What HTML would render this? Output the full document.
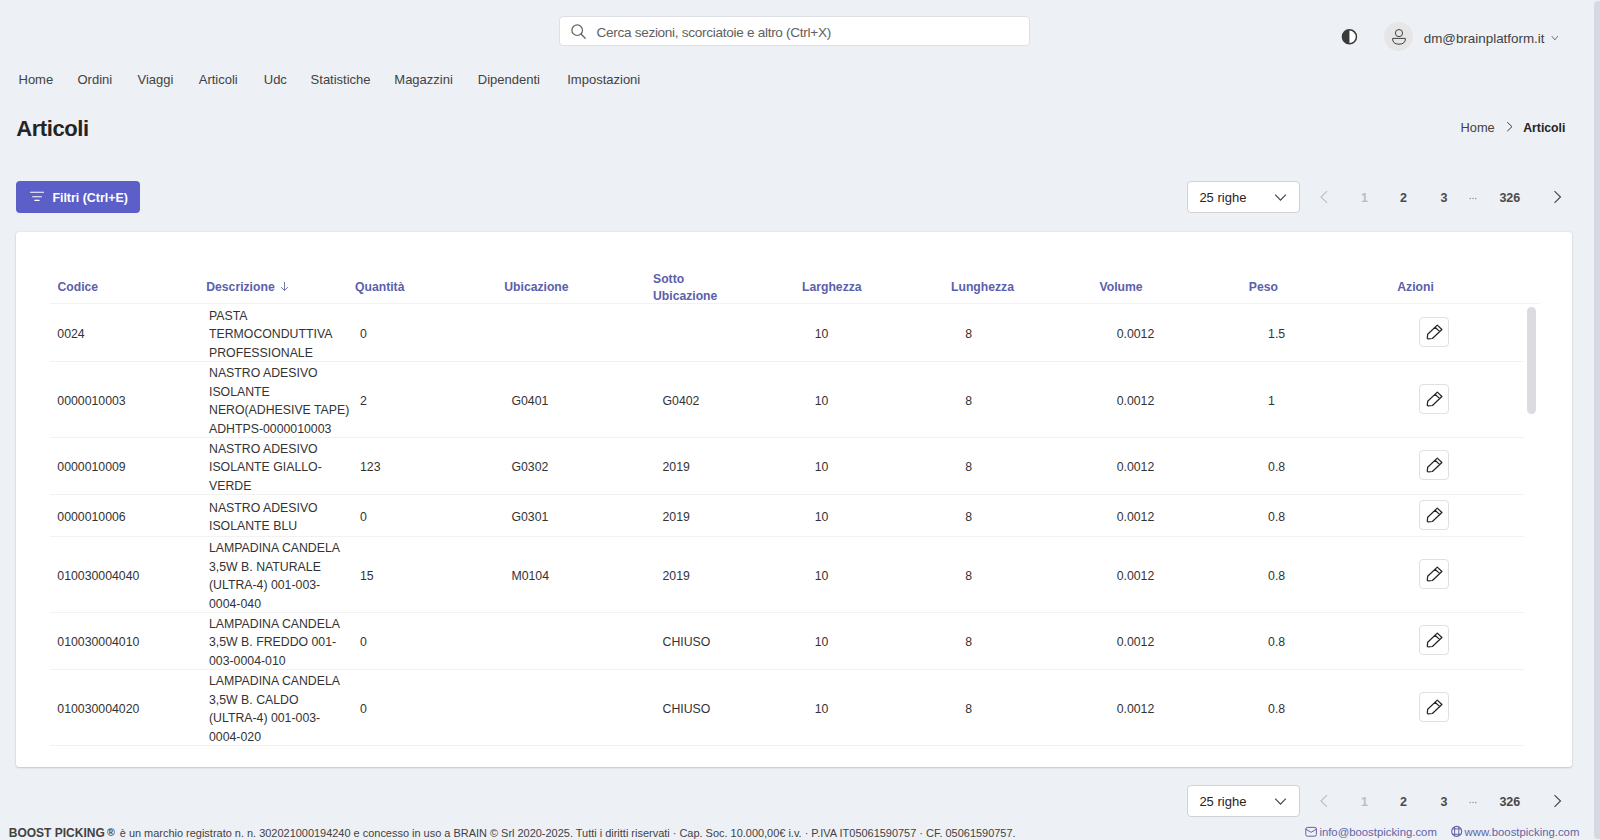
<!DOCTYPE html>
<html><head><meta charset="utf-8"><style>
html,body{margin:0;padding:0;}
body{width:1600px;height:840px;overflow:hidden;position:relative;background:#edf0f5;font-family:"Liberation Sans",sans-serif;}
.t{position:absolute;white-space:pre;line-height:1;}
svg{display:block}
</style></head><body>
<div style="position:absolute;left:1594px;top:1px;width:8px;height:838px;border-radius:4px;background:#d6d9e1"></div>
<div style="position:absolute;left:559px;top:16px;width:469px;height:28px;border:1px solid #dcdfe4;border-radius:4px;background:#fff"></div>
<svg style="position:absolute;left:566px;top:20px" width="24" height="24" viewBox="0 0 24 24"><circle cx="11.2" cy="10.2" r="5.3" fill="none" stroke="#616161" stroke-width="1.2"/><path d="M15 14 L19.2 18.2" stroke="#616161" stroke-width="1.3" stroke-linecap="round"/></svg>
<div class="t" style="left:596.40px;top:26.08px;font-size:13.6px;color:#616161;letter-spacing:-0.3px;">Cerca sezioni, scorciatoie e altro (Ctrl+X)</div>
<svg style="position:absolute;left:1339px;top:27px" width="20" height="20" viewBox="0 0 20 20"><circle cx="10.45" cy="9.85" r="7" fill="#fff" stroke="#3a3a3a" stroke-width="1.5"/><path d="M10.45 2.85 A7 7 0 0 0 10.45 16.85 Z" fill="#3a3a3a"/></svg>
<div style="position:absolute;left:1384px;top:22px;width:29px;height:29px;border-radius:50%;background:#e6e6e6"></div>
<svg style="position:absolute;left:1384px;top:22px" width="29" height="29" viewBox="0 0 29 29"><circle cx="15" cy="11.1" r="3.6" fill="none" stroke="#424242" stroke-width="1"/><path d="M8.6 16.4 H21.4 Q21.6 22.2 15 22.2 Q8.4 22.2 8.6 16.4 Z" fill="none" stroke="#424242" stroke-width="1" stroke-linejoin="round"/></svg>
<div class="t" style="left:1423.75px;top:31.85px;font-size:13.4px;color:#424242;">dm@brainplatform.it</div>
<svg style="position:absolute;left:1550px;top:34px" width="10" height="8" viewBox="0 0 10 8"><path d="M1.7 2 L4.8 5.9 L7.9 2" fill="none" stroke="#616161" stroke-width="0.9"/></svg>
<div class="t" style="left:18.50px;top:72.74px;font-size:13px;color:#424242;">Home</div>
<div class="t" style="left:77.50px;top:72.74px;font-size:13px;color:#424242;">Ordini</div>
<div class="t" style="left:137.50px;top:72.74px;font-size:13px;color:#424242;">Viaggi</div>
<div class="t" style="left:198.75px;top:72.74px;font-size:13px;color:#424242;">Articoli</div>
<div class="t" style="left:263.75px;top:72.74px;font-size:13px;color:#424242;">Udc</div>
<div class="t" style="left:310.60px;top:72.74px;font-size:13px;color:#424242;">Statistiche</div>
<div class="t" style="left:394.30px;top:72.74px;font-size:13px;color:#424242;">Magazzini</div>
<div class="t" style="left:477.80px;top:72.74px;font-size:13px;color:#424242;">Dipendenti</div>
<div class="t" style="left:567.25px;top:72.74px;font-size:13px;color:#424242;">Impostazioni</div>
<div class="t" style="left:16.25px;top:117.62px;font-size:22px;font-weight:700;color:#242424;letter-spacing:-0.43px;">Articoli</div>
<div class="t" style="left:1460.60px;top:121.96px;font-size:12.8px;color:#424242;">Home</div>
<svg style="position:absolute;left:1504px;top:120px" width="12" height="14" viewBox="0 0 12 14"><path d="M3.2 2.2 L8 6.7 L3.2 11.2" fill="none" stroke="#424242" stroke-width="1"/></svg>
<div class="t" style="left:1523.20px;top:121.63px;font-size:12.25px;font-weight:700;color:#242424;">Articoli</div>
<div style="position:absolute;left:16px;top:181px;width:124px;height:32px;border-radius:4px;background:#5b5fc7"></div>
<svg style="position:absolute;left:28px;top:189px" width="18" height="16" viewBox="0 0 18 16"><path d="M2.5 3.3 H15.5 M4.7 7.8 H13.3 M6.9 11.4 H11.1" stroke="#fff" stroke-width="1.1" stroke-linecap="round"/></svg>
<div class="t" style="left:52.40px;top:192.10px;font-size:12.4px;font-weight:700;color:#ffffff;">Filtri (Ctrl+E)</div>
<div style="position:absolute;left:1187px;top:181px;width:111px;height:30px;border:1px solid #d1d1d1;border-radius:4px;background:#fff"></div>
<div class="t" style="left:1199.40px;top:191.24px;font-size:13px;color:#242424;">25 righe</div>
<svg style="position:absolute;left:1272px;top:190px" width="16" height="14" viewBox="0 0 16 14"><path d="M3.2 4.6 L8.5 10.2 L13.8 4.6" fill="none" stroke="#424242" stroke-width="1.1"/></svg>
<svg style="position:absolute;left:1316px;top:188px" width="14" height="18" viewBox="0 0 14 18"><path d="M11 3.2 L5 9 L11 14.8" fill="none" stroke="#bdbdbd" stroke-width="1.1"/></svg>
<div class="t" style="left:1361.00px;top:192.17px;font-size:12.5px;font-weight:700;color:#bdbdbd;">1</div>
<div class="t" style="left:1400.00px;top:192.17px;font-size:12.5px;font-weight:700;color:#4a4a4a;">2</div>
<div class="t" style="left:1440.60px;top:192.17px;font-size:12.5px;font-weight:700;color:#4a4a4a;">3</div>
<svg style="position:absolute;left:1468px;top:196px" width="10" height="5" viewBox="0 0 10 5"><circle cx="2.2" cy="2.5" r="0.7" fill="#888"/><circle cx="5" cy="2.5" r="0.7" fill="#888"/><circle cx="7.8" cy="2.5" r="0.7" fill="#888"/></svg>
<div class="t" style="left:1499.40px;top:192.17px;font-size:12.5px;font-weight:700;color:#4a4a4a;">326</div>
<svg style="position:absolute;left:1550px;top:188px" width="14" height="18" viewBox="0 0 14 18"><path d="M4.5 3.2 L10.5 9 L4.5 14.8" fill="none" stroke="#424242" stroke-width="1.1"/></svg>
<div style="position:absolute;left:1187px;top:785px;width:111px;height:30px;border:1px solid #d1d1d1;border-radius:4px;background:#fff"></div>
<div class="t" style="left:1199.40px;top:795.24px;font-size:13px;color:#242424;">25 righe</div>
<svg style="position:absolute;left:1272px;top:794px" width="16" height="14" viewBox="0 0 16 14"><path d="M3.2 4.6 L8.5 10.2 L13.8 4.6" fill="none" stroke="#424242" stroke-width="1.1"/></svg>
<svg style="position:absolute;left:1316px;top:792px" width="14" height="18" viewBox="0 0 14 18"><path d="M11 3.2 L5 9 L11 14.8" fill="none" stroke="#bdbdbd" stroke-width="1.1"/></svg>
<div class="t" style="left:1361.00px;top:796.17px;font-size:12.5px;font-weight:700;color:#bdbdbd;">1</div>
<div class="t" style="left:1400.00px;top:796.17px;font-size:12.5px;font-weight:700;color:#4a4a4a;">2</div>
<div class="t" style="left:1440.60px;top:796.17px;font-size:12.5px;font-weight:700;color:#4a4a4a;">3</div>
<svg style="position:absolute;left:1468px;top:800px" width="10" height="5" viewBox="0 0 10 5"><circle cx="2.2" cy="2.5" r="0.7" fill="#888"/><circle cx="5" cy="2.5" r="0.7" fill="#888"/><circle cx="7.8" cy="2.5" r="0.7" fill="#888"/></svg>
<div class="t" style="left:1499.40px;top:796.17px;font-size:12.5px;font-weight:700;color:#4a4a4a;">326</div>
<svg style="position:absolute;left:1550px;top:792px" width="14" height="18" viewBox="0 0 14 18"><path d="M4.5 3.2 L10.5 9 L4.5 14.8" fill="none" stroke="#424242" stroke-width="1.1"/></svg>
<div style="position:absolute;left:16px;top:232px;width:1556px;height:535px;border-radius:3px;background:#fff;box-shadow:0 0 2px rgba(0,0,0,0.12),0 1px 2px rgba(0,0,0,0.14)"></div>
<div class="t" style="left:57.50px;top:281.17px;font-size:12.2px;font-weight:700;color:#5c5fab;">Codice</div>
<div class="t" style="left:206.25px;top:281.17px;font-size:12.2px;font-weight:700;color:#5c5fab;">Descrizione</div>
<div class="t" style="left:355.00px;top:281.17px;font-size:12.2px;font-weight:700;color:#5c5fab;">Quantità</div>
<div class="t" style="left:504.25px;top:281.17px;font-size:12.2px;font-weight:700;color:#5c5fab;">Ubicazione</div>
<div class="t" style="left:802.00px;top:281.17px;font-size:12.2px;font-weight:700;color:#5c5fab;">Larghezza</div>
<div class="t" style="left:951.00px;top:281.17px;font-size:12.2px;font-weight:700;color:#5c5fab;">Lunghezza</div>
<div class="t" style="left:1099.50px;top:281.17px;font-size:12.2px;font-weight:700;color:#5c5fab;">Volume</div>
<div class="t" style="left:1248.75px;top:281.17px;font-size:12.2px;font-weight:700;color:#5c5fab;">Peso</div>
<div class="t" style="left:1397.25px;top:281.17px;font-size:12.2px;font-weight:700;color:#5c5fab;">Azioni</div>
<div class="t" style="left:653.00px;top:272.67px;font-size:12.2px;font-weight:700;color:#5c5fab;">Sotto</div>
<div class="t" style="left:653.00px;top:289.67px;font-size:12.2px;font-weight:700;color:#5c5fab;">Ubicazione</div>
<svg style="position:absolute;left:278px;top:280px" width="12" height="14" viewBox="0 0 12 14"><path d="M6.5 2 V10.5 M3.1 7.1 L6.5 10.5 L9.9 7.1" fill="none" stroke="#7375b3" stroke-width="1"/></svg>
<div style="position:absolute;left:50px;top:303px;width:1490px;height:1px;background:#f2f2f2"></div>
<div class="t" style="left:57.30px;top:328.39px;font-size:12.3px;color:#333333;">0024</div>
<div class="t" style="left:209.00px;top:309.71px;font-size:12.3px;color:#333333;">PASTA</div>
<div class="t" style="left:209.00px;top:328.46px;font-size:12.3px;color:#333333;">TERMOCONDUTTIVA</div>
<div class="t" style="left:209.00px;top:347.21px;font-size:12.3px;color:#333333;">PROFESSIONALE</div>
<div class="t" style="left:360.00px;top:328.39px;font-size:12.3px;color:#333333;">0</div>
<div class="t" style="left:814.70px;top:328.39px;font-size:12.3px;color:#333333;">10</div>
<div class="t" style="left:965.30px;top:328.39px;font-size:12.3px;color:#333333;">8</div>
<div class="t" style="left:1116.70px;top:328.39px;font-size:12.3px;color:#333333;">0.0012</div>
<div class="t" style="left:1268.10px;top:328.39px;font-size:12.3px;color:#333333;">1.5</div>
<div style="position:absolute;left:1419px;top:317px;width:28px;height:28px;border:1px solid #e0e0e0;border-radius:4px;background:#fff"></div>
<div style="position:absolute;left:1419px;top:317px"><svg width="30" height="30" viewBox="0 0 30 30"><path d="M18.3 8.1 L22.9 12.5 L13.4 21.5 L9.4 21.8 Q8.2 21.9 8.3 20.7 L8.7 17.2 Z M16.1 10.2 L20.7 14.6" fill="none" stroke="#242424" stroke-width="1.25" stroke-linejoin="round"/></svg></div>
<div style="position:absolute;left:50px;top:361px;width:1474px;height:1px;background:#f2f2f2"></div>
<div class="t" style="left:57.30px;top:394.89px;font-size:12.3px;color:#333333;">0000010003</div>
<div class="t" style="left:209.00px;top:366.84px;font-size:12.3px;color:#333333;">NASTRO ADESIVO</div>
<div class="t" style="left:209.00px;top:385.59px;font-size:12.3px;color:#333333;">ISOLANTE</div>
<div class="t" style="left:209.00px;top:404.34px;font-size:12.3px;color:#333333;">NERO(ADHESIVE TAPE)</div>
<div class="t" style="left:209.00px;top:423.09px;font-size:12.3px;color:#333333;">ADHTPS-0000010003</div>
<div class="t" style="left:360.00px;top:394.89px;font-size:12.3px;color:#333333;">2</div>
<div class="t" style="left:511.40px;top:394.89px;font-size:12.3px;color:#333333;">G0401</div>
<div class="t" style="left:662.50px;top:394.89px;font-size:12.3px;color:#333333;">G0402</div>
<div class="t" style="left:814.70px;top:394.89px;font-size:12.3px;color:#333333;">10</div>
<div class="t" style="left:965.30px;top:394.89px;font-size:12.3px;color:#333333;">8</div>
<div class="t" style="left:1116.70px;top:394.89px;font-size:12.3px;color:#333333;">0.0012</div>
<div class="t" style="left:1268.10px;top:394.89px;font-size:12.3px;color:#333333;">1</div>
<div style="position:absolute;left:1419px;top:384px;width:28px;height:28px;border:1px solid #e0e0e0;border-radius:4px;background:#fff"></div>
<div style="position:absolute;left:1419px;top:384px"><svg width="30" height="30" viewBox="0 0 30 30"><path d="M18.3 8.1 L22.9 12.5 L13.4 21.5 L9.4 21.8 Q8.2 21.9 8.3 20.7 L8.7 17.2 Z M16.1 10.2 L20.7 14.6" fill="none" stroke="#242424" stroke-width="1.25" stroke-linejoin="round"/></svg></div>
<div style="position:absolute;left:50px;top:437px;width:1474px;height:1px;background:#f2f2f2"></div>
<div class="t" style="left:57.30px;top:461.39px;font-size:12.3px;color:#333333;">0000010009</div>
<div class="t" style="left:209.00px;top:442.71px;font-size:12.3px;color:#333333;">NASTRO ADESIVO</div>
<div class="t" style="left:209.00px;top:461.46px;font-size:12.3px;color:#333333;">ISOLANTE GIALLO-</div>
<div class="t" style="left:209.00px;top:480.21px;font-size:12.3px;color:#333333;">VERDE</div>
<div class="t" style="left:360.00px;top:461.39px;font-size:12.3px;color:#333333;">123</div>
<div class="t" style="left:511.40px;top:461.39px;font-size:12.3px;color:#333333;">G0302</div>
<div class="t" style="left:662.50px;top:461.39px;font-size:12.3px;color:#333333;">2019</div>
<div class="t" style="left:814.70px;top:461.39px;font-size:12.3px;color:#333333;">10</div>
<div class="t" style="left:965.30px;top:461.39px;font-size:12.3px;color:#333333;">8</div>
<div class="t" style="left:1116.70px;top:461.39px;font-size:12.3px;color:#333333;">0.0012</div>
<div class="t" style="left:1268.10px;top:461.39px;font-size:12.3px;color:#333333;">0.8</div>
<div style="position:absolute;left:1419px;top:450px;width:28px;height:28px;border:1px solid #e0e0e0;border-radius:4px;background:#fff"></div>
<div style="position:absolute;left:1419px;top:450px"><svg width="30" height="30" viewBox="0 0 30 30"><path d="M18.3 8.1 L22.9 12.5 L13.4 21.5 L9.4 21.8 Q8.2 21.9 8.3 20.7 L8.7 17.2 Z M16.1 10.2 L20.7 14.6" fill="none" stroke="#242424" stroke-width="1.25" stroke-linejoin="round"/></svg></div>
<div style="position:absolute;left:50px;top:494px;width:1474px;height:1px;background:#f2f2f2"></div>
<div class="t" style="left:57.30px;top:510.89px;font-size:12.3px;color:#333333;">0000010006</div>
<div class="t" style="left:209.00px;top:501.59px;font-size:12.3px;color:#333333;">NASTRO ADESIVO</div>
<div class="t" style="left:209.00px;top:520.34px;font-size:12.3px;color:#333333;">ISOLANTE BLU</div>
<div class="t" style="left:360.00px;top:510.89px;font-size:12.3px;color:#333333;">0</div>
<div class="t" style="left:511.40px;top:510.89px;font-size:12.3px;color:#333333;">G0301</div>
<div class="t" style="left:662.50px;top:510.89px;font-size:12.3px;color:#333333;">2019</div>
<div class="t" style="left:814.70px;top:510.89px;font-size:12.3px;color:#333333;">10</div>
<div class="t" style="left:965.30px;top:510.89px;font-size:12.3px;color:#333333;">8</div>
<div class="t" style="left:1116.70px;top:510.89px;font-size:12.3px;color:#333333;">0.0012</div>
<div class="t" style="left:1268.10px;top:510.89px;font-size:12.3px;color:#333333;">0.8</div>
<div style="position:absolute;left:1419px;top:500px;width:28px;height:28px;border:1px solid #e0e0e0;border-radius:4px;background:#fff"></div>
<div style="position:absolute;left:1419px;top:500px"><svg width="30" height="30" viewBox="0 0 30 30"><path d="M18.3 8.1 L22.9 12.5 L13.4 21.5 L9.4 21.8 Q8.2 21.9 8.3 20.7 L8.7 17.2 Z M16.1 10.2 L20.7 14.6" fill="none" stroke="#242424" stroke-width="1.25" stroke-linejoin="round"/></svg></div>
<div style="position:absolute;left:50px;top:536px;width:1474px;height:1px;background:#f2f2f2"></div>
<div class="t" style="left:57.30px;top:569.89px;font-size:12.3px;color:#333333;">010030004040</div>
<div class="t" style="left:209.00px;top:541.84px;font-size:12.3px;color:#333333;">LAMPADINA CANDELA</div>
<div class="t" style="left:209.00px;top:560.59px;font-size:12.3px;color:#333333;">3,5W B. NATURALE</div>
<div class="t" style="left:209.00px;top:579.34px;font-size:12.3px;color:#333333;">(ULTRA-4) 001-003-</div>
<div class="t" style="left:209.00px;top:598.09px;font-size:12.3px;color:#333333;">0004-040</div>
<div class="t" style="left:360.00px;top:569.89px;font-size:12.3px;color:#333333;">15</div>
<div class="t" style="left:511.40px;top:569.89px;font-size:12.3px;color:#333333;">M0104</div>
<div class="t" style="left:662.50px;top:569.89px;font-size:12.3px;color:#333333;">2019</div>
<div class="t" style="left:814.70px;top:569.89px;font-size:12.3px;color:#333333;">10</div>
<div class="t" style="left:965.30px;top:569.89px;font-size:12.3px;color:#333333;">8</div>
<div class="t" style="left:1116.70px;top:569.89px;font-size:12.3px;color:#333333;">0.0012</div>
<div class="t" style="left:1268.10px;top:569.89px;font-size:12.3px;color:#333333;">0.8</div>
<div style="position:absolute;left:1419px;top:559px;width:28px;height:28px;border:1px solid #e0e0e0;border-radius:4px;background:#fff"></div>
<div style="position:absolute;left:1419px;top:559px"><svg width="30" height="30" viewBox="0 0 30 30"><path d="M18.3 8.1 L22.9 12.5 L13.4 21.5 L9.4 21.8 Q8.2 21.9 8.3 20.7 L8.7 17.2 Z M16.1 10.2 L20.7 14.6" fill="none" stroke="#242424" stroke-width="1.25" stroke-linejoin="round"/></svg></div>
<div style="position:absolute;left:50px;top:612px;width:1474px;height:1px;background:#f2f2f2"></div>
<div class="t" style="left:57.30px;top:636.39px;font-size:12.3px;color:#333333;">010030004010</div>
<div class="t" style="left:209.00px;top:617.71px;font-size:12.3px;color:#333333;">LAMPADINA CANDELA</div>
<div class="t" style="left:209.00px;top:636.46px;font-size:12.3px;color:#333333;">3,5W B. FREDDO 001-</div>
<div class="t" style="left:209.00px;top:655.21px;font-size:12.3px;color:#333333;">003-0004-010</div>
<div class="t" style="left:360.00px;top:636.39px;font-size:12.3px;color:#333333;">0</div>
<div class="t" style="left:662.50px;top:636.39px;font-size:12.3px;color:#333333;">CHIUSO</div>
<div class="t" style="left:814.70px;top:636.39px;font-size:12.3px;color:#333333;">10</div>
<div class="t" style="left:965.30px;top:636.39px;font-size:12.3px;color:#333333;">8</div>
<div class="t" style="left:1116.70px;top:636.39px;font-size:12.3px;color:#333333;">0.0012</div>
<div class="t" style="left:1268.10px;top:636.39px;font-size:12.3px;color:#333333;">0.8</div>
<div style="position:absolute;left:1419px;top:625px;width:28px;height:28px;border:1px solid #e0e0e0;border-radius:4px;background:#fff"></div>
<div style="position:absolute;left:1419px;top:625px"><svg width="30" height="30" viewBox="0 0 30 30"><path d="M18.3 8.1 L22.9 12.5 L13.4 21.5 L9.4 21.8 Q8.2 21.9 8.3 20.7 L8.7 17.2 Z M16.1 10.2 L20.7 14.6" fill="none" stroke="#242424" stroke-width="1.25" stroke-linejoin="round"/></svg></div>
<div style="position:absolute;left:50px;top:669px;width:1474px;height:1px;background:#f2f2f2"></div>
<div class="t" style="left:57.30px;top:702.89px;font-size:12.3px;color:#333333;">010030004020</div>
<div class="t" style="left:209.00px;top:674.84px;font-size:12.3px;color:#333333;">LAMPADINA CANDELA</div>
<div class="t" style="left:209.00px;top:693.59px;font-size:12.3px;color:#333333;">3,5W B. CALDO</div>
<div class="t" style="left:209.00px;top:712.34px;font-size:12.3px;color:#333333;">(ULTRA-4) 001-003-</div>
<div class="t" style="left:209.00px;top:731.09px;font-size:12.3px;color:#333333;">0004-020</div>
<div class="t" style="left:360.00px;top:702.89px;font-size:12.3px;color:#333333;">0</div>
<div class="t" style="left:662.50px;top:702.89px;font-size:12.3px;color:#333333;">CHIUSO</div>
<div class="t" style="left:814.70px;top:702.89px;font-size:12.3px;color:#333333;">10</div>
<div class="t" style="left:965.30px;top:702.89px;font-size:12.3px;color:#333333;">8</div>
<div class="t" style="left:1116.70px;top:702.89px;font-size:12.3px;color:#333333;">0.0012</div>
<div class="t" style="left:1268.10px;top:702.89px;font-size:12.3px;color:#333333;">0.8</div>
<div style="position:absolute;left:1419px;top:692px;width:28px;height:28px;border:1px solid #e0e0e0;border-radius:4px;background:#fff"></div>
<div style="position:absolute;left:1419px;top:692px"><svg width="30" height="30" viewBox="0 0 30 30"><path d="M18.3 8.1 L22.9 12.5 L13.4 21.5 L9.4 21.8 Q8.2 21.9 8.3 20.7 L8.7 17.2 Z M16.1 10.2 L20.7 14.6" fill="none" stroke="#242424" stroke-width="1.25" stroke-linejoin="round"/></svg></div>
<div style="position:absolute;left:50px;top:745px;width:1474px;height:1px;background:#f2f2f2"></div>
<div style="position:absolute;left:1527px;top:307px;width:9px;height:107px;border-radius:4.5px;background:#dcdce0"></div>
<div class="t" style="left:8.75px;top:827.09px;font-size:12px;font-weight:700;color:#424242;">BOOST PICKING</div>
<div class="t" style="left:106.90px;top:827.22px;font-size:10.6px;font-weight:700;color:#424242;">®</div>
<div class="t" style="left:119.75px;top:827.97px;font-size:10.96px;color:#424242;">è un marchio registrato n. n. 302021000194240 e concesso in uso a BRAIN © Srl 2020-2025. Tutti i diritti riservati · Cap. Soc. 10.000,00€ i.v. · P.IVA IT05061590757 · CF. 05061590757.</div>
<svg style="position:absolute;left:1304px;top:825px" width="14" height="13" viewBox="0 0 14 13"><rect x="1.8" y="2.4" width="10.6" height="8.8" rx="1.6" fill="none" stroke="#6264a7" stroke-width="1"/><path d="M1.9 4.2 L7.1 7.3 L12.3 4.2" fill="none" stroke="#6264a7" stroke-width="1"/></svg>
<div class="t" style="left:1319.40px;top:827.19px;font-size:11.35px;color:#6264a7;">info@boostpicking.com</div>
<svg style="position:absolute;left:1450px;top:825px" width="13" height="13" viewBox="0 0 13 13"><circle cx="6.7" cy="6.4" r="5" fill="none" stroke="#6264a7" stroke-width="1.1"/><path d="M4.6 1.8 V11 M8.8 1.8 V11 M2.3 3.9 H11.1 M2.3 9.3 H11.1" stroke="#6264a7" stroke-width="1"/></svg>
<div class="t" style="left:1464.62px;top:827.19px;font-size:11.35px;color:#6264a7;">www.boostpicking.com</div>
</body></html>
